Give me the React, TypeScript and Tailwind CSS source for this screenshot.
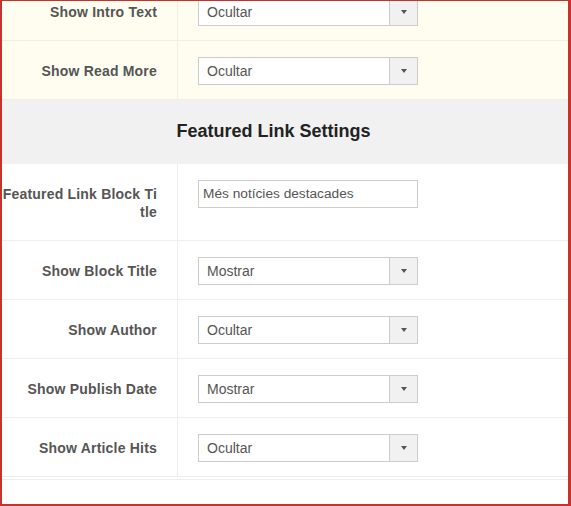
import React from "react";

function Caret() {
  return (
    <span className="block h-0 w-0 border-l-[3px] border-r-[3px] border-t-[4px] border-l-transparent border-r-transparent border-t-[#555555]" />
  );
}

function Select({ value }: { value: string }) {
  return (
    <div className="flex h-[28px] w-[220px] border border-[#cccccc] bg-white">
      <div className="flex-1 pl-2 text-[14px] leading-[26px] text-[#555555]">{value}</div>
      <div className="flex w-[28px] items-center justify-center border-l border-[#cccccc] bg-[#f1f1f1]">
        <Caret />
      </div>
    </div>
  );
}

function Row({
  label,
  children,
  yellow,
}: {
  label: string[];
  children: React.ReactNode;
  yellow?: boolean;
}) {
  return (
    <div className={"flex border-b " + (yellow ? "border-[#f1efe2] bg-[#fffdf0]" : "border-[#eeeeee] bg-white")}>
      <div
        className={
          "flex w-[176px] shrink-0 flex-col items-end border-r pr-5 pt-[21px] pb-[19px] text-[14px] font-bold leading-[18px] tracking-[0.2px] text-[#555555] " +
          (yellow ? "border-[#f1efe2]" : "border-[#eeeeee]")
        }
      >
        {label.map((l) => (
          <span key={l} className="whitespace-nowrap">
            {l}
          </span>
        ))}
      </div>
      <div className="pl-5 pt-4 pb-[14px]">{children}</div>
    </div>
  );
}

export default function App() {
  return (
    <div className="h-[506px] w-[571px] overflow-hidden border-b-2 border-l-2 border-r-[3px] border-t border-[#c8322c] bg-white font-['Liberation_Sans',Arial,sans-serif]">
      <div className="-mt-[19px]">
        <Row label={["Show Intro Text"]} yellow>
          <Select value="Ocultar" />
        </Row>
        <Row label={["Show Read More"]} yellow>
          <Select value="Ocultar" />
        </Row>
        <div className="flex h-[64px] items-center bg-[#f1f1f1]">
          <div className="w-[543px] pb-[2px] text-center text-[18px] font-bold text-[#222222]">
            Featured Link Settings
          </div>
        </div>
        <Row label={["Featured Link Block Ti", "tle"]}>
          <div className="h-[28px] w-[220px] border border-[#cccccc] bg-white pl-[4px] text-[13.7px] leading-[26px] text-[#555555]">
            Més notícies destacades
          </div>
        </Row>
        <Row label={["Show Block Title"]}>
          <Select value="Mostrar" />
        </Row>
        <Row label={["Show Author"]}>
          <Select value="Ocultar" />
        </Row>
        <Row label={["Show Publish Date"]}>
          <Select value="Mostrar" />
        </Row>
        <Row label={["Show Article Hits"]}>
          <Select value="Ocultar" />
        </Row>
        <div className="mt-[2px] border-t border-[#eeeeee]" />
      </div>
    </div>
  );
}
